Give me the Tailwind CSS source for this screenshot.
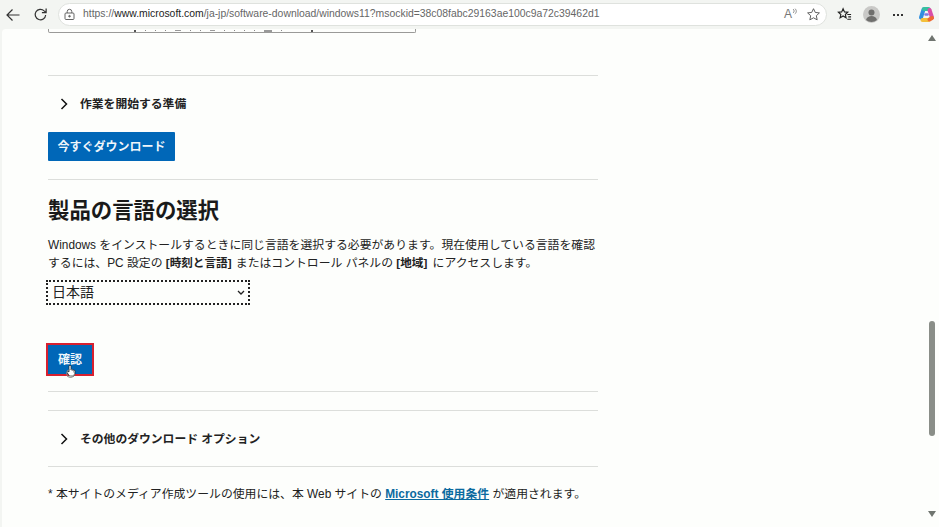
<!DOCTYPE html>
<html lang="ja">
<head>
<meta charset="UTF-8">
<title>Windows 11 download</title>
<script src="https://cdn.jsdelivr.net/npm/@tailwindcss/browser@4"></script>
</head>
<body class="w-[939px] h-[527px] overflow-hidden bg-[#f3f5f2] font-['Liberation_Sans','Noto_Sans_CJK_JP',sans-serif]">
  <!-- browser toolbar -->
  <div class="h-[29px] flex items-center pl-[5px]">
    <svg class="w-[16px] h-[16px]" viewBox="0 0 16 16" fill="none" stroke="#333" stroke-width="1.2"><path d="M14.500 8H2M7.500 2.500 2 8l5.500 5.500"/></svg>
    <svg class="w-[15px] h-[15px] ml-[12px]" viewBox="0 0 16 16" fill="none" stroke="#333" stroke-width="1.3"><path d="M13.500 8.500a5.600 5.600 0 1 1-1.600-4.400L14 6M14 1.500V6H9.500"/></svg>
    <div class="ml-[10px] w-[769px] h-[23px] rounded-full bg-white border border-[#dfe2de] flex items-center">
      <svg class="ml-[4px] w-[13px] h-[13px]" viewBox="0 0 13 13" fill="none" stroke="#666" stroke-width="1"><rect x="2" y="5" width="9" height="6.500" rx="1"/><path d="M4.200 5V3.600a2.300 2.300 0 0 1 4.600 0V5"/><circle cx="6.500" cy="8.200" r=".8" fill="#666"/></svg>
      <span class="ml-[7px] w-[678px] text-[10.4px] leading-none text-[#666] whitespace-nowrap">https://<span class="text-[#222]">www.microsoft.com</span>/ja-jp/software-download/windows11?msockid=38c08fabc29163ae100c9a72c39462d1</span>
      <span class="ml-[23px] w-[14px] flex items-start text-[#777]">
        <span class="text-[12px] leading-[13px]">A</span>
        <svg class="w-[5px] h-[7px]" viewBox="0 0 5 7" fill="none" stroke="#777" stroke-width=".8"><path d="M1 1c1.500 1 1.500 3 0 4M2.800.5c2 1.500 2 4 0 5.500"/></svg>
      </span>
      <svg class="ml-[8px] w-[15px] h-[15px]" viewBox="0 0 16 16" fill="none" stroke="#555" stroke-width="1"><path d="m8 1.800 1.900 4 4.400.5-3.300 3 .9 4.400L8 11.500l-3.900 2.200.9-4.400-3.300-3 4.400-.5z"/></svg>
    </div>
    <svg class="ml-[10px] w-[15px] h-[15px]" viewBox="0 0 16 16" fill="none" stroke="#222" stroke-width="1.200"><path d="m6.500 1.800 1.500 3.400 3.500.4-2.600 2.400.8 3.500-3.200-1.900-3.200 1.900.8-3.500L1.500 5.600 5 5.200zM11 8h4M12 10.500h3M11 13h4"/></svg>
    <svg class="ml-[11px] w-[17px] h-[17px]" viewBox="0 0 17 17"><circle cx="8.500" cy="8.500" r="8.500" fill="#c9c9c7"/><circle cx="8.500" cy="6.500" r="3" fill="#6f6f6d"/><path d="M3 14c.8-3 3-4 5.500-4s4.700 1 5.500 4a8.500 8.500 0 0 1-11 0z" fill="#6f6f6d"/></svg>
    <div class="ml-[13px] flex gap-[2px]"><i class="w-[2px] h-[2px] bg-[#333]"></i><i class="w-[2px] h-[2px] bg-[#333]"></i><i class="w-[2px] h-[2px] bg-[#333]"></i></div>
    <svg class="ml-[15px] w-[17px] h-[17px]" viewBox="0 0 17 17" fill="none" stroke-width="4" stroke-linecap="round"><path d="M5.500 3.500 3 11.500" stroke="#2f8fe0"/><path d="M6 3h4.500" stroke="#35c0a0"/><path d="M11.500 4 14 11.500" stroke="#d94fa8"/><path d="M4.500 14h6" stroke="#f3c03b"/><path d="M11.500 13.500l2.500-1.500" stroke="#ee6a35"/><path d="M7.500 8.500l2 0" stroke="#7f78e0" stroke-width="2.500"/></svg>
  </div>

  <!-- page -->
  <div class="relative ml-[2px] h-[498px] bg-[#fdfefc] rounded-tl-[4px] overflow-hidden">
    <div class="absolute right-0 top-0 bottom-0 w-[15px] flex flex-col items-center">
      <span class="mt-[6px] w-0 h-0 border-x-[4px] border-x-transparent border-b-[6px] border-b-[#707570]"></span>
      <span class="mt-[280px] w-[6px] h-[115px] rounded-full bg-[#8a8e88]"></span>
      <span class="mt-[75px] w-0 h-0 border-x-[4px] border-x-transparent border-t-[6px] border-t-[#707570]"></span>
    </div>
    <div class="w-[550px] ml-[46px]">
      <div class="h-[4px] w-[368px] border border-t-0 border-[#9a9a98] rounded-b-[2px] flex items-center pl-[85px] gap-[9px]">
        <i class="w-[2px] h-[2px] bg-[#555]"></i><i class="w-[1px] h-[1px] bg-[#888]"></i><i class="w-[1px] h-[1px] bg-[#888]"></i><i class="w-[1px] h-[1px] bg-[#888]"></i><i class="w-[6px] h-[1px] bg-[#999]"></i><i class="w-[1px] h-[1px] bg-[#888]"></i><i class="w-[1px] h-[1px] bg-[#888]"></i><i class="w-[5px] h-[1px] bg-[#999]"></i><i class="w-[1px] h-[1px] bg-[#888]"></i><i class="w-[1px] h-[1px] bg-[#888]"></i><i class="w-[1px] h-[1px] bg-[#888]"></i><i class="w-[1px] h-[1px] bg-[#888]"></i><i class="w-[8px] h-[2px] bg-[#999]"></i><i class="w-[1px] h-[1px] bg-[#888]"></i><i class="ml-[20px] w-[2px] h-[2px] bg-[#555]"></i>
      </div>
      <div class="mt-[42px] border-t border-[#dcdedb]"></div>
      <div class="h-[56px] flex items-center pl-[12px] text-[11.8px] font-bold text-[#222]">
        <svg class="w-[8px] h-[12px]" viewBox="0 0 8 12" fill="none" stroke="#111" stroke-width="1.500"><path d="m1.500 1 5 5-5 5"/></svg>
        <span class="ml-[12px] pt-[2px]">作業を開始する準備</span>
      </div>
      <div class="w-[127px] h-[29px] bg-[#0067b8] rounded-[1px] flex items-center justify-center text-[12px] font-bold text-white/95">今すぐダウンロード</div>
      <div class="mt-[18px] border-t border-[#dcdedb]"></div>
      <h1 class="mt-[17px] text-[21.4px] leading-[28px] font-bold text-[#1a1a1a]">製品の言語の選択</h1>
      <p class="mt-[11px] text-[11.85px] leading-[18px] text-[#222]">Windows をインストールするときに同じ言語を選択する必要があります。現在使用している言語を確認するには、PC 設定の <b class="mr-[1px] text-[11.6px]">[時刻と言語]</b> またはコントロール パネルの <b class="mr-[2px] text-[11.6px]">[地域]</b> にアクセスします。</p>
      <div class="mt-[8px] -ml-[2px] w-[204px] h-[25px] border-2 border-dotted border-[#222] flex items-center justify-between pl-[4px] pr-[3px] text-[14px] text-[#222]">
        <span>日本語</span>
        <svg class="w-[8px] h-[6px]" viewBox="0 0 8 6" fill="none" stroke="#222" stroke-width="1.300"><path d="m1 1 3 3 3-3"/></svg>
      </div>
      <div class="relative mt-[38px] -ml-[2px] w-[48px] h-[33px] bg-[#0067b8] border-2 border-[#d8202f] flex items-center justify-center text-[12px] font-bold text-white/95">
        確認
        <svg class="absolute left-[18px] top-[19px] w-[10px] h-[14px]" viewBox="0 0 10 14"><path d="M3 1.500v6.500L1.500 7 1 8.500 3.500 12H8l1-2.500V6.500L5 5.500V1.500z" fill="#fff" stroke="#222" stroke-width=".7"/></svg>
        <span class="absolute left-[18px] top-[24px] w-[9px] h-[9px] rounded-full border border-[#888]"></span>
      </div>
      <div class="mt-[15px] border-t border-[#dcdedb]"></div>
      <div class="mt-[18px] border-t border-[#dcdedb]"></div>
      <div class="h-[55px] flex items-center pl-[12px] text-[11.8px] font-bold text-[#222]">
        <svg class="w-[8px] h-[12px]" viewBox="0 0 8 12" fill="none" stroke="#111" stroke-width="1.500"><path d="m1.500 1 5 5-5 5"/></svg>
        <span class="ml-[12px] pt-[2px]">その他のダウンロード オプション</span>
      </div>
      <div class="border-t border-[#dcdedb]"></div>
      <p class="mt-[18px] text-[11.85px] leading-[18px] text-[#222]">* 本サイトのメディア作成ツールの使用には、本 Web サイトの <a class="font-bold text-[#0b6a9f] underline">Microsoft 使用条件</a> が適用されます。</p>
    </div>
  </div>
</body>
</html>
